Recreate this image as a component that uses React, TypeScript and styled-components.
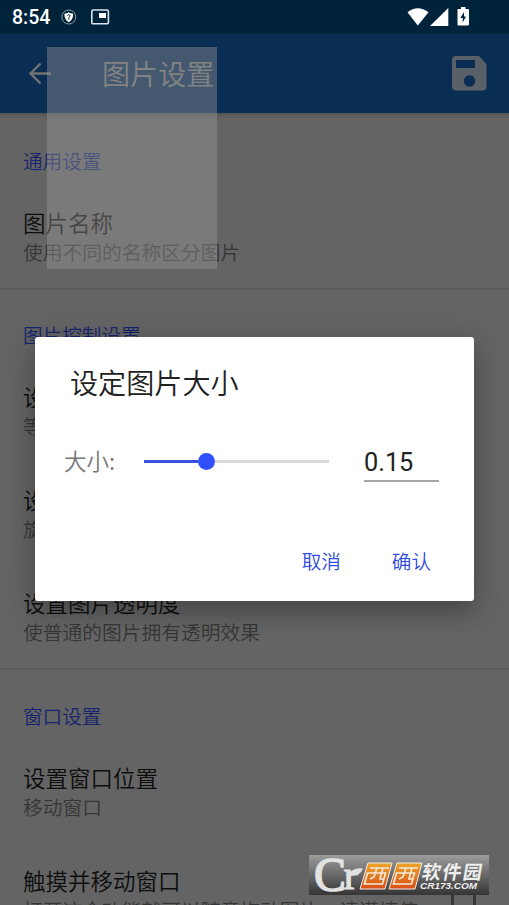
import React from "react";
import styled, { createGlobalStyle } from "styled-components";

const GlobalStyle = createGlobalStyle`
  * { box-sizing: border-box; }
  html, body { margin: 0; background: #646464; overflow: hidden; }
  body { font-family: Roboto, "Noto Sans CJK SC", sans-serif; }
`;

const Screen = styled.div`
  position: relative;
  display: flex;
  flex-direction: column;
  width: 509px;
  height: 905px;
  overflow: hidden;
  background: #646464;
`;

const StatusBar = styled.header`
  display: flex;
  align-items: center;
  height: 34px;
  flex: none;
  padding: 0 38px 0 12px;
  background: #00233c;
  color: #fff;
  svg { display: block; }
`;

const Clock = styled.span`
  font: 500 19.5px/34px Roboto, sans-serif;
  width: 49px;
  padding-top: 2px;
`;

const Spacer = styled.div`
  flex: 1;
`;

const AppBar = styled.div`
  display: flex;
  align-items: center;
  height: 79px;
  flex: none;
  padding: 0 22px 0 27px;
  background: #0a2e53;
  svg { display: block; }
`;

const AppTitle = styled.h1`
  flex: 1;
  margin: 0 0 2px 50px;
  font: 350 28.1px/40px "Noto Sans CJK SC", sans-serif;
  color: #737373;
`;

const Content = styled.main`
  flex: 1;
  min-height: 0;
  overflow: hidden;
  background: linear-gradient(#555, #646464 6px);
`;

const Section = styled.section<{ $lead: number }>`
  padding-top: ${(p) => p.$lead}px;
  & + & { border-top: 2px solid #595959; }
`;

const Category = styled.h2`
  margin: 0 0 9px;
  padding-left: 23px;
  font: 350 19.6px/30px "Noto Sans CJK SC", sans-serif;
  color: #17246d;
`;

const Item = styled.div`
  display: flex;
  height: 103px;
  padding: 21px 33px 0 23px;
`;

const ItemText = styled.div`
  flex: 1;
  min-width: 0;
  white-space: nowrap;
`;

const ItemTitle = styled.div`
  font: 350 22.5px/32px "Noto Sans CJK SC", sans-serif;
  color: #0d0d0d;
`;

const ItemSummary = styled.div`
  font: 350 19.75px/27px "Noto Sans CJK SC", sans-serif;
  color: #363636;
`;

const CheckBox = styled.span`
  flex: none;
  width: 25px;
  height: 25px;
  margin-top: 28px;
  border: 3px solid #363636;
  border-radius: 3px;
`;

const FloatingImage = styled.div`
  position: absolute;
  left: 47px;
  top: 47px;
  width: 170px;
  height: 222px;
  background: rgba(155, 155, 155, 0.4);
`;

const Dialog = styled.div`
  position: absolute;
  left: 35px;
  top: 337px;
  width: 439px;
  height: 264px;
  display: flex;
  flex-direction: column;
  border-radius: 3px;
  background: #fff;
  box-shadow: 0 12px 24px rgba(0, 0, 0, 0.22), 0 4px 32px rgba(0, 0, 0, 0.12);
`;

const DialogTitle = styled.h2`
  margin: 25px 0 0 35px;
  font: 350 28.1px/40px "Noto Sans CJK SC", sans-serif;
  color: #212121;
`;

const SizeRow = styled.div`
  display: flex;
  align-items: center;
  height: 46px;
  margin-top: 36px;
  padding: 0 35px 0 29px;
`;

const SizeLabel = styled.span`
  width: 80px;
  margin-bottom: 2px;
  font: 350 22.5px/32px "Noto Sans CJK SC", sans-serif;
  color: #757575;
`;

const Track = styled.div`
  display: flex;
  align-items: center;
  width: 185px;
  height: 3px;
  background: #dadada;
`;

const TrackFill = styled.div`
  width: 53.5px;
  height: 3px;
  background: #3953dd;
`;

const Thumb = styled.div`
  flex: none;
  width: 17px;
  height: 17px;
  border-radius: 50%;
  background: #304ffe;
`;

const SizeValue = styled.div`
  width: 75px;
  height: 38px;
  margin: 3px 0 0 35px;
  border-bottom: 2px solid #a6a6a6;
  font: 400 25.3px/38px Roboto, sans-serif;
  color: #212121;
`;

const Actions = styled.div`
  display: flex;
  justify-content: flex-end;
  gap: 51px;
  margin-top: 61px;
  padding-right: 43px;
`;

const Action = styled.button`
  padding: 0;
  border: 0;
  background: none;
  font: 350 19.6px/32px "Noto Sans CJK SC", sans-serif;
  color: #304be0;
`;

const Watermark = styled.div`
  position: absolute;
  left: 309px;
  top: 855px;
  width: 180px;
  height: 40px;
  background: linear-gradient(#9c9c9c, #353535);
  svg { display: block; }
`;

const sections = [
  { name: "通用设置", lead: 33, items: [["图片名称", "使用不同的名称区分图片"]] },
  {
    name: "图片控制设置",
    lead: 30,
    items: [
      ["设置图片大小", "等比例缩放图片"],
      ["设置图片角度", "旋转图片"],
      ["设置图片透明度", "使普通的图片拥有透明效果"],
    ],
  },
  {
    name: "窗口设置",
    lead: 31,
    items: [
      ["设置窗口位置", "移动窗口"],
      ["触摸并移动窗口", "打开这个功能就可以随意拖动图片，请谨慎使", "check"],
    ],
  },
];

function StatusIcons() {
  return (
    <svg width="70" height="22" viewBox="0 0 70 22">
      <circle cx="7.8" cy="11" r="7" fill="none" stroke="#8b9ca7" strokeWidth="1" />
      <path d="M7.8 6.300c1.500 1 2.700 1.300 4.400 1.400 0 4-1.200 6.700-4.400 8.500-3.200-1.800-4.400-4.500-4.400-8.500 1.700-.1 2.900-.4 4.400-1.400z" fill="#fff" />
      <path d="M6.400 9.500q1.400-1.600 2.700 0 .3 1-1.300 2v2" fill="none" stroke="#00233c" strokeWidth="1" />
      <rect x="30.800" y="4" width="16.600" height="13.800" rx="1.400" fill="none" stroke="#dce5ea" strokeWidth="1.600" />
      <rect x="38" y="7" width="7" height="5" fill="#fff" />
    </svg>
  );
}

function SignalIcons() {
  return (
    <svg width="64" height="22" viewBox="0 0 64 22" fill="#fff">
      <path d="M0.500 6.200Q10.500-1.800 21.500 6.200L10.800 19.500z" />
      <path d="M41.300 2v18H23z" />
      <path d="M51 3h3V1h4.500v2H61q1 0 1 1v14.500q0 1-1 1H51.500q-1 0-1-1V4q0-1 .5-1z" />
      <path d="M57 6l-3.600 6h2.300v4.500l3.300-6h-2z" fill="#00233c" />
    </svg>
  );
}

function Logo() {
  return (
    <svg width="180" height="40" viewBox="0 0 180 40">
      <defs>
        <linearGradient id="orange" x1="0" y1="0" x2="0" y2="1">
          <stop offset="0" stopColor="#eda52c" />
          <stop offset="1" stopColor="#d94e16" />
        </linearGradient>
      </defs>
      <text x="5" y="35.500" fontFamily="Liberation Serif" fontSize="48" fill="#e2e2e2" stroke="#e2e2e2" strokeWidth="1.500">C</text>
      <text x="34.500" y="34" fontFamily="Liberation Serif" fontSize="43" fill="#e2e2e2" stroke="#e2e2e2" strokeWidth="1">r</text>
      <path d="M41 21q1-9 13-7.500-3 8-13 7.500z" fill="#e2e2e2" />
      <g stroke="#eee" strokeWidth="1" fill="url(#orange)">
        <path d="M59 8h24l-7 26H51z" />
        <path d="M88 8h25l-7 26H80z" />
      </g>
      <g fill="none" stroke="#f6ead8" strokeWidth="1.700">
        <path d="M61 13h19M58.500 18h18l-3 11h-18zM68 13l-3 9-4 2M74 13l-3 11h3" />
        <path d="M90 13h19M87.500 18h18l-3 11h-18zM97 13l-3 9-4 2M103 13l-3 11h3" />
      </g>
      <g transform="translate(112 24) skewX(-10)" fill="#eee">
        <text fontFamily="Noto Sans CJK SC" fontWeight="700" fontSize="19" textLength="60">软件园</text>
      </g>
      <text x="111" y="34" fontFamily="Liberation Sans" fontStyle="italic" fontWeight="700" fontSize="9.500" textLength="57" lengthAdjust="spacingAndGlyphs" fill="#eee">CR173.COM</text>
    </svg>
  );
}

export default function App() {
  return (
    <>
      <GlobalStyle />
      <Screen>
        <StatusBar>
          <Clock>8:54</Clock>
          <StatusIcons />
          <Spacer />
          <SignalIcons />
        </StatusBar>
        <AppBar>
          <svg width="25" height="24" viewBox="0 0 25 24" fill="none" stroke="#737373" strokeWidth="2.400">
            <path d="M24 11.500H3M13.500 1.500L3.500 11.500 13.500 21.500" />
          </svg>
          <AppTitle>图片设置</AppTitle>
          <svg width="35" height="35" viewBox="0 0 35 35">
            <path fillRule="evenodd" fill="#596067" d="M4 0h23l7.500 8v22.500q0 4-4 4H4q-4 0-4-4V4q0-4 4-4zM4 4v8h19V4zM17.500 19.300a5.700 5.700 0 1 0 .01 0z" />
          </svg>
        </AppBar>
        <Content>
          {sections.map((s) => (
            <Section key={s.name} $lead={s.lead}>
              <Category>{s.name}</Category>
              {s.items.map(([title, summary, check]) => (
                <Item key={title}>
                  <ItemText>
                    <ItemTitle>{title}</ItemTitle>
                    <ItemSummary>{summary}</ItemSummary>
                  </ItemText>
                  {check && <CheckBox />}
                </Item>
              ))}
            </Section>
          ))}
        </Content>
        <FloatingImage />
        <Dialog role="dialog">
          <DialogTitle>设定图片大小</DialogTitle>
          <SizeRow>
            <SizeLabel>大小:</SizeLabel>
            <Track>
              <TrackFill />
              <Thumb />
            </Track>
            <SizeValue>0.15</SizeValue>
          </SizeRow>
          <Actions>
            <Action>取消</Action>
            <Action>确认</Action>
          </Actions>
        </Dialog>
        <Watermark>
          <Logo />
        </Watermark>
      </Screen>
    </>
  );
}
